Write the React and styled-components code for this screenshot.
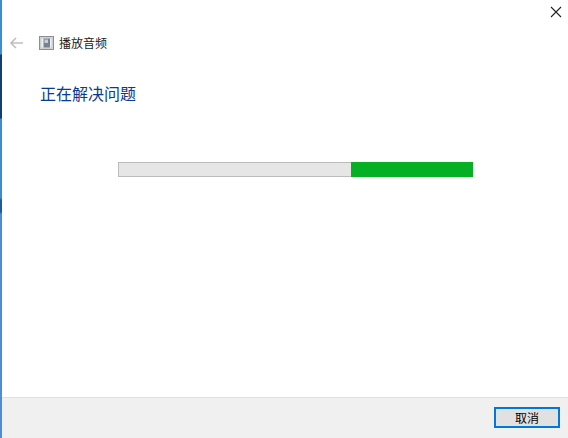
import React from "react";
import styled, { createGlobalStyle } from "styled-components";

const Global = createGlobalStyle`
  html, body { margin: 0; padding: 0; background: #fff; }
  body { font-family: "Noto Sans CJK SC", "Liberation Sans", sans-serif; }
`;

const Dialog = styled.div`
  width: 568px;
  height: 438px;
  box-sizing: border-box;
  display: flex;
  flex-direction: column;
  background: #fff;
  overflow: hidden;
`;

const Frame = styled.div`
  flex: 1;
  display: flex;
  min-height: 0;
`;

const Edge = styled.div`
  width: 2px;
  flex: none;
  background: linear-gradient(
    to bottom,
    #3a8fd0 0,
    #3a8fd0 54px,
    #12406e 55px,
    #12406e 118px,
    #3f8bd0 119px,
    #3f8bd0 198px,
    #1d5c97 200px,
    #1d5c97 212px,
    #4a8fd4 214px,
    #4a8fd4 100%
  );
`;

const Body = styled.div`
  flex: 1;
  min-width: 0;
  display: flex;
  flex-direction: column;
`;

const TitleBar = styled.div`
  height: 25px;
  display: flex;
  justify-content: flex-end;
  align-items: flex-start;
  padding: 6px 6px 0 0;
  box-sizing: border-box;
`;

const CloseButton = styled.button`
  width: 12px;
  height: 12px;
  padding: 0;
  border: 0;
  background: none;
  display: block;
`;

const NavRow = styled.div`
  height: 36px;
  display: flex;
  align-items: center;
  padding-left: 8px;
`;

const BackButton = styled.button`
  width: 13px;
  height: 12px;
  padding: 0;
  border: 0;
  background: none;
  display: block;
  margin-right: 16px;
`;

const AppIcon = styled.svg`
  width: 15px;
  height: 14px;
  flex: none;
  margin-right: 5px;
`;

const NavTitle = styled.span`
  font-size: 12px;
  line-height: 16px;
  color: #1a1a1a;
`;

const Content = styled.main`
  flex: 1;
  display: flex;
  flex-direction: column;
  padding: 20px 0 0 38px;
`;

const Heading = styled.h1`
  margin: 0;
  font-size: 16px;
  font-weight: 400;
  line-height: 24px;
  color: #0b3a94;
`;

const Track = styled.div`
  width: 355px;
  height: 15px;
  margin: 57px 0 0 78px;
  box-sizing: border-box;
  display: flex;
  justify-content: flex-end;
  background: #e6e6e6;
  border: 1px solid #bcbcbc;
  border-right: 0;
`;

const Fill = styled.div`
  height: 15px;
  margin-top: -1px;
  background: #06b025;
`;

const Footer = styled.footer`
  height: 41px;
  box-sizing: border-box;
  display: flex;
  justify-content: flex-end;
  align-items: flex-start;
  padding: 9px 8px 0 0;
  background: #f0f0f0;
  border-top: 1px solid #dfdfdf;
`;

const CancelButton = styled.button`
  width: 66px;
  height: 21px;
  padding: 0;
  box-sizing: border-box;
  border: 2px solid #0078d7;
  background: #e1e1e1;
  color: #000;
  font-family: inherit;
  font-size: 12px;
  line-height: 16px;
`;

export default function App() {
  const progress = 122;
  return (
    <Dialog>
      <Global />
      <Frame>
        <Edge />
        <Body>
          <TitleBar>
            <CloseButton aria-label="关闭">
              <svg width="12" height="12" viewBox="0 0 12 12">
                <path d="M1 1 11 11M11 1 1 11" stroke="#222" strokeWidth="1.1" fill="none" />
              </svg>
            </CloseButton>
          </TitleBar>
          <NavRow>
            <BackButton aria-label="返回">
              <svg width="13" height="12" viewBox="0 0 13 12">
                <path d="M13 6H1M6 1 1 6l5 5" stroke="#c4bfbc" strokeWidth="1.6" fill="none" />
              </svg>
            </BackButton>
            <AppIcon viewBox="0 0 15 14">
              <rect x="0.5" y="0.5" width="14" height="13" fill="#d8dadd" stroke="#8a8f96" />
              <rect x="2" y="2" width="11" height="10" fill="#eef0f2" stroke="#b4b8bd" strokeWidth="0.6" />
              <rect x="4.5" y="2.5" width="6.5" height="9" fill="#76828f" />
              <rect x="5.5" y="3.5" width="3.5" height="3.5" fill="#c7ced6" />
            </AppIcon>
            <NavTitle>播放音频</NavTitle>
          </NavRow>
          <Content>
            <Heading>正在解决问题</Heading>
            <Track>
              <Fill style={{ width: `${progress}px` }} />
            </Track>
          </Content>
          <Footer>
            <CancelButton>取消</CancelButton>
          </Footer>
        </Body>
      </Frame>
    </Dialog>
  );
}
